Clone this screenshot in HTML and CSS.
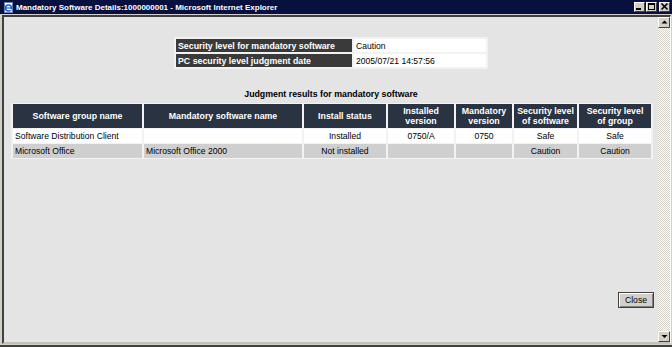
FILE: index.html
```html
<!DOCTYPE html>
<html>
<head>
    <meta charset="UTF-8">
    <title>Mandatory Software Details:1000000001</title>
    <link rel="stylesheet" href="styles.css">
</head>
<body>
  <div class="window">
      <div class="titlebar">
          <svg class="appicon" width="11" height="11" viewBox="0 0 11 11">
              <rect x="1.5" y="0.5" width="8" height="10" fill="#fff" stroke="#6a7fa8"/>
              <circle cx="5.5" cy="6" r="3" fill="none" stroke="#1a5ad8" stroke-width="1.6"/>
              <line x1="2.8" y1="6" x2="8.2" y2="6" stroke="#1a5ad8" stroke-width="1.2"/>
              <line x1="6.5" y1="7.6" x2="8.6" y2="7.6" stroke="#fff" stroke-width="1.2"/>
          </svg>
          <span class="title">Mandatory Software Details:1000000001 - Microsoft Internet Explorer</span>
          <div class="winbtns">
              <span class="winbtn"><svg width="9" height="8" viewBox="0 0 9 8"><rect x="1" y="5" width="5" height="2" fill="#000"/></svg></span>
              <span class="winbtn"><svg width="9" height="8" viewBox="0 0 9 8"><rect x="1.5" y="0.5" width="6" height="6" fill="none" stroke="#000"/><rect x="1" y="0" width="7" height="2" fill="#000"/></svg></span>
              <span class="winbtn close-x"><svg width="9" height="8" viewBox="0 0 9 8"><path d="M1.5 0.5 L7.5 6.5 M7.5 0.5 L1.5 6.5" stroke="#000" stroke-width="1.6"/></svg></span>
          </div>
      </div>

      <div class="frame">
          <div class="page">
              <table class="summary">
                  <tr>
                      <th>Security level for mandatory software</th>
                      <td>Caution</td>
                  </tr>
                  <tr>
                      <th>PC security level judgment date</th>
                      <td>2005/07/21 14:57:56</td>
                  </tr>
              </table>

              <div class="caption">Judgment results for mandatory software</div>

              <table class="results">
                  <thead>
                      <tr>
                          <th class="c-group">Software group name</th>
                          <th class="c-name">Mandatory software name</th>
                          <th class="c-status">Install status</th>
                          <th class="c-inst">Installed<br>version</th>
                          <th class="c-mand">Mandatory<br>version</th>
                          <th class="c-soft">Security level<br>of software</th>
                          <th class="c-grp">Security level<br>of group</th>
                      </tr>
                  </thead>
                  <tbody>
                      <tr>
                          <td>Software Distribution Client</td>
                          <td></td>
                          <td class="mid">Installed</td>
                          <td class="mid">0750/A</td>
                          <td class="mid">0750</td>
                          <td class="mid">Safe</td>
                          <td class="mid">Safe</td>
                      </tr>
                      <tr class="alt">
                          <td>Microsoft Office</td>
                          <td>Microsoft Office 2000</td>
                          <td class="mid">Not installed</td>
                          <td class="mid"></td>
                          <td class="mid"></td>
                          <td class="mid">Caution</td>
                          <td class="mid">Caution</td>
                      </tr>
                  </tbody>
              </table>

              <button class="button" type="button">Close</button>
          </div>

          <div class="scrollbar">
              <span class="arrow"><svg width="7" height="5" viewBox="0 0 7 5"><path d="M3.5 0.5 L6.5 3.5 L0.5 3.5 Z" fill="#000"/></svg></span>
              <span class="track"></span>
              <span class="arrow"><svg width="7" height="5" viewBox="0 0 7 5"><path d="M0.5 1 L6.5 1 L3.5 4 Z" fill="#000"/></svg></span>
          </div>
      </div>
  </div>
</body>
</html>
```

FILE: styles.css
```css
body {
  margin: 0;
  font-family: 'Liberation Sans', Arial, sans-serif;
  background: #d4d0c8;
}

.window {
  width: 672px;
  height: 347px;
  box-sizing: border-box;
  display: flex;
  flex-direction: column;
  background: #d4d0c8;
  border-bottom: 2px solid #404040;
}

.titlebar {
  height: 14px;
  flex: none;
  display: flex;
  align-items: center;
  padding: 0 2px 0 3px;
  background: #07103f;
  color: #fff;
}
.appicon {
  flex: none;
  margin-right: 2px;
}
.title {
  font-size: 8px;
  font-weight: bold;
  white-space: nowrap;
}
.winbtns {
  margin-left: auto;
  display: flex;
  gap: 1px;
}
.winbtn {
  width: 11px;
  height: 10px;
  box-sizing: border-box;
  display: flex;
  align-items: center;
  justify-content: center;
  background: #d4d0c8;
  border: 1px solid;
  border-color: #fff #404040 #404040 #fff;
}
.close-x {
  margin-left: 1px;
}

.frame {
  flex: 1;
  display: flex;
  margin: 1px 1px 1px 2px;
  border: 2px solid;
  border-color: #404040 #fff #c0c0c0 #404040;
  border-right-width: 1px;
  min-height: 0;
}

.page {
  flex: 1;
  display: flex;
  flex-direction: column;
  background: #e4e4e4;
  font-size: 8.6px;
  color: #000;
}

.summary {
  margin: 20px auto 0;
  border-spacing: 2px;
  background: #f2f2f2;
}
.summary th {
  width: 172px;
  height: 13px;
  padding: 0 2px;
  text-align: left;
  font-size: 8.8px;
  background: #3a3a3a;
  color: #fff;
}
.summary td {
  width: 128px;
  padding: 0 2px;
  background: #fff;
}

.caption {
  margin-top: 20px;
  text-align: center;
  font-weight: bold;
  font-size: 8.8px;
  line-height: 11px;
}

.results {
  width: 642px;
  table-layout: fixed;
  margin: 3px 0 0 7px;
  border-spacing: 2px 1px;
  background: #f2f2f2;
}
.results th {
  height: 24px;
  padding: 0 2px;
  line-height: 10px;
  font-size: 8.8px;
  background: #2a3342;
  color: #fff;
}
.results td {
  height: 14px;
  padding: 0 2px;
  background: #fff;
  white-space: nowrap;
}
.results tr.alt td {
  background: #cfcfcf;
}
.results .mid {
  text-align: center;
}
.c-group { width: 125px; }
.c-name { width: 154px; }
.c-status { width: 78px; }
.c-inst { width: 62px; }
.c-mand { width: 52px; }
.c-soft { width: 59px; }
.c-grp { width: 68px; }

.button {
  align-self: flex-end;
  margin: auto 4px 34px 0;
  width: 36px;
  height: 16px;
  padding: 0;
  font-family: 'Liberation Sans', Arial, sans-serif;
  font-size: 8.6px;
  color: #000;
  background: #d4d0c8;
  border: 1px solid #404040;
  box-shadow: inset 1px 1px #fff, inset -1px -1px #808080;
}

.scrollbar {
  width: 12px;
  flex: none;
  display: flex;
  flex-direction: column;
  background-color: #fff;
  background-image: repeating-conic-gradient(#d4d0c8 0 25%, #fff 0 50%);
  background-size: 2px 2px;
}
.arrow {
  height: 11px;
  box-sizing: border-box;
  display: flex;
  align-items: center;
  justify-content: center;
  background: #d4d0c8;
  border: 1px solid;
  border-color: #fff #404040 #404040 #fff;
}
.track {
  flex: 1;
}
```
